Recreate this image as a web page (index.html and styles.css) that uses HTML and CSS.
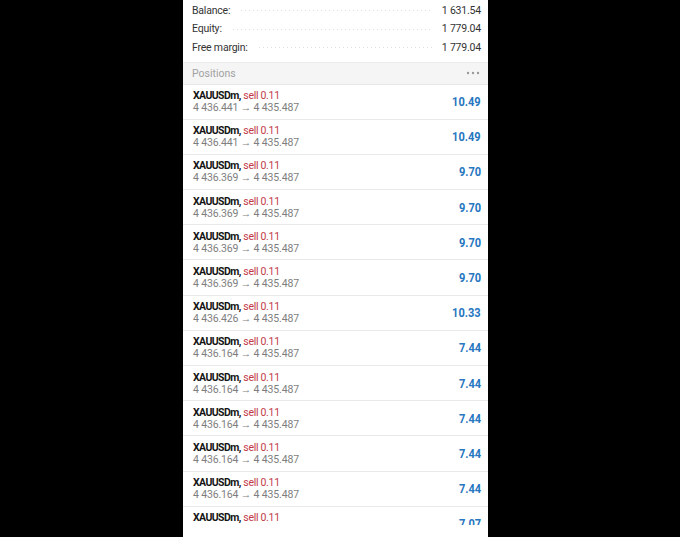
FILE: index.html
```html
<!DOCTYPE html>
<html>
<head>
<meta charset="utf-8">
<link rel="stylesheet" href="styles.css">
</head>
<body>
<div class="screen">
  <div class="viewport">
    <div class="summary">
      <div class="line"><span class="lbl">Balance:</span><span class="dots"></span><span class="val">1 631.54</span></div>
      <div class="line"><span class="lbl">Equity:</span><span class="dots"></span><span class="val">1 779.04</span></div>
      <div class="line"><span class="lbl">Free margin:</span><span class="dots"></span><span class="val">1 779.04</span></div>
    </div>
    <div class="header">
      <span>Positions</span>
      <svg class="more" width="14" height="4" viewBox="0 0 14 4"><circle cx="2" cy="2" r="1.2"/><circle cx="7" cy="2" r="1.2"/><circle cx="12" cy="2" r="1.2"/></svg>
    </div>
    <div class="list">
      <div class="row"><div class="info"><div class="name"><b>XAUUSDm,</b> <span class="sell">sell 0.11</span></div><div class="price">4 436.441 → 4 435.487</div></div><div class="profit">10.49</div></div>
      <div class="row"><div class="info"><div class="name"><b>XAUUSDm,</b> <span class="sell">sell 0.11</span></div><div class="price">4 436.441 → 4 435.487</div></div><div class="profit">10.49</div></div>
      <div class="row"><div class="info"><div class="name"><b>XAUUSDm,</b> <span class="sell">sell 0.11</span></div><div class="price">4 436.369 → 4 435.487</div></div><div class="profit">9.70</div></div>
      <div class="row"><div class="info"><div class="name"><b>XAUUSDm,</b> <span class="sell">sell 0.11</span></div><div class="price">4 436.369 → 4 435.487</div></div><div class="profit">9.70</div></div>
      <div class="row"><div class="info"><div class="name"><b>XAUUSDm,</b> <span class="sell">sell 0.11</span></div><div class="price">4 436.369 → 4 435.487</div></div><div class="profit">9.70</div></div>
      <div class="row"><div class="info"><div class="name"><b>XAUUSDm,</b> <span class="sell">sell 0.11</span></div><div class="price">4 436.369 → 4 435.487</div></div><div class="profit">9.70</div></div>
      <div class="row"><div class="info"><div class="name"><b>XAUUSDm,</b> <span class="sell">sell 0.11</span></div><div class="price">4 436.426 → 4 435.487</div></div><div class="profit">10.33</div></div>
      <div class="row"><div class="info"><div class="name"><b>XAUUSDm,</b> <span class="sell">sell 0.11</span></div><div class="price">4 436.164 → 4 435.487</div></div><div class="profit">7.44</div></div>
      <div class="row"><div class="info"><div class="name"><b>XAUUSDm,</b> <span class="sell">sell 0.11</span></div><div class="price">4 436.164 → 4 435.487</div></div><div class="profit">7.44</div></div>
      <div class="row"><div class="info"><div class="name"><b>XAUUSDm,</b> <span class="sell">sell 0.11</span></div><div class="price">4 436.164 → 4 435.487</div></div><div class="profit">7.44</div></div>
      <div class="row"><div class="info"><div class="name"><b>XAUUSDm,</b> <span class="sell">sell 0.11</span></div><div class="price">4 436.164 → 4 435.487</div></div><div class="profit">7.44</div></div>
      <div class="row"><div class="info"><div class="name"><b>XAUUSDm,</b> <span class="sell">sell 0.11</span></div><div class="price">4 436.164 → 4 435.487</div></div><div class="profit">7.44</div></div>
      <div class="row"><div class="info"><div class="name"><b>XAUUSDm,</b> <span class="sell">sell 0.11</span></div><div class="price">4 436.164 → 4 435.487</div></div><div class="profit">7.07</div></div>
    </div>
  </div>
</div>
</body>
</html>
```

FILE: styles.css
```css
html, body {
  margin: 0;
  padding: 0;
  background: #000;
  height: 100%;
  overflow: hidden;
}
body {
  font-family: Roboto, "Liberation Sans", sans-serif;
}
.screen {
  margin-left: 183px;
  width: 305px;
  height: 537px;
  background: #fff;
  overflow: hidden;
}
.viewport {
  height: 525px;
  overflow: hidden;
}
.summary {
  padding: 1px 7px 5px 9px;
}
.line {
  display: flex;
  align-items: center;
  height: 18.5px;
  font-size: 10.5px;
  color: #333;
  letter-spacing: -0.2px;
}
.dots {
  flex: 1;
  margin: 1px 10px 0 11px;
  height: 1px;
  background-image: repeating-linear-gradient(to right, #dcdcdc 0, #dcdcdc 1px, transparent 1px, transparent 4px);
}
.header {
  display: flex;
  justify-content: space-between;
  align-items: center;
  height: 21px;
  padding: 0 8px 0 9px;
  background: #f5f5f5;
  border-top: 1px solid #ededed;
  border-bottom: 1px solid #e6e6e6;
  font-size: 10.5px;
  color: #a2a2a2;
}
.more {
  fill: #9a9a9a;
}
.row {
  display: flex;
  justify-content: space-between;
  align-items: center;
  height: 34.2px;
  padding: 0 7px 0 10px;
  border-bottom: 1px solid #e9e9e9;
}
.info {
  display: flex;
  flex-direction: column;
  font-size: 10.5px;
  line-height: 12px;
  padding-top: 1px;
}
.name b {
  color: #151515;
  font-weight: 700;
  letter-spacing: -0.6px;
}
.sell {
  color: #c23a48;
  letter-spacing: -0.3px;
}
.price {
  color: #7e7e7e;
  letter-spacing: -0.15px;
}
.profit {
  color: #2676c0;
  font-weight: 700;
  font-size: 13px;
  transform: scaleX(0.85);
  transform-origin: right center;
}
```
